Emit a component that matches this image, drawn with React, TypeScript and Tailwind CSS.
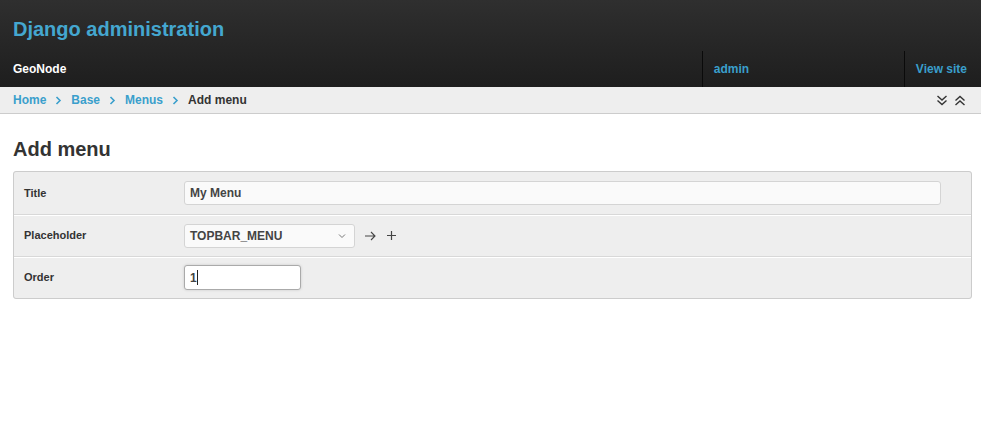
export default function App() {
  const font = { fontFamily: '"Liberation Sans", Arial, sans-serif' };
  return (
    <div className="min-h-[446px] bg-white text-[#333]" style={font}>
      <header className="bg-gradient-to-b from-[#2f2f2f] to-[#1e1e1e]">
        <div className="h-[51px] flex items-center px-[13px] pt-[6px]">
          <h1 className="text-[20px] font-bold text-[#44a7d0]">Django administration</h1>
        </div>
        <div className="flex h-[36px] items-stretch">
          <div className="flex-1 flex items-center px-[13px] text-[12px] font-bold text-white">GeoNode</div>
          <div className="w-[202px] border-l border-[#0a0a0a] flex items-center pl-[11px] text-[12px] font-bold text-[#3a9fcc]">
            admin
          </div>
          <div className="border-l border-[#0a0a0a] flex items-center pl-[11px] pr-[14px] text-[12px] font-bold text-[#3a9fcc]">
            View site
          </div>
        </div>
      </header>

      <nav className="h-[27px] bg-[#eee] border-b border-[#ccc] flex items-center px-[13px] text-[12px] font-bold">
        <a className="text-[#3a9fcc]">Home</a>
        <Chevron />
        <a className="text-[#3a9fcc]">Base</a>
        <Chevron />
        <a className="text-[#3a9fcc]">Menus</a>
        <Chevron />
        <span className="text-[#333]">Add menu</span>
        <div className="ml-auto flex items-center gap-[6px] pr-[2px] text-[#333]">
          <svg width="12" height="11" viewBox="0 0 12 11" fill="none" stroke="currentColor" strokeWidth="1.4">
            <path d="M1.5 1l4.5 4 4.5-4M1.5 5.5l4.5 4 4.5-4" />
          </svg>
          <svg width="12" height="11" viewBox="0 0 12 11" fill="none" stroke="currentColor" strokeWidth="1.4">
            <path d="M1.5 5.5l4.5-4 4.5 4M1.5 10l4.5-4 4.5 4" />
          </svg>
        </div>
      </nav>

      <main className="pl-[13px] pr-[9px] pt-[20px]">
        <h2 className="text-[20px] font-bold text-[#333] mb-[7px]">Add menu</h2>
        <fieldset className="border border-[#ccc] rounded-[3px] bg-[#eee]">
          <Row label="Title">
            <div className="w-[757px] h-[24px] border border-[#d4d4d4] rounded-[3px] bg-[#fafafa] flex items-center px-[5px] text-[12px] font-bold text-[#444]">
              My Menu
            </div>
          </Row>
          <Row label="Placeholder" divider>
            <div className="flex items-center">
              <div className="w-[171px] h-[24px] border border-[#d4d4d4] rounded-[3px] bg-[#fafafa] flex items-center justify-between pl-[5px] pr-[8px] text-[12px] font-bold text-[#444]">
                <span>TOPBAR_MENU</span>
                <svg width="8" height="6" viewBox="0 0 8 6" fill="none" stroke="#777" strokeWidth="1">
                  <path d="M1 1.5l3 3 3-3" />
                </svg>
              </div>
              <svg className="ml-[9px]" width="13" height="12" viewBox="0 0 13 12" fill="none" stroke="#444" strokeWidth="1.1">
                <path d="M1 6h10M7 2l4 4-4 4" />
              </svg>
              <svg className="ml-[9px]" width="11" height="11" viewBox="0 0 11 11" fill="none" stroke="#444" strokeWidth="1.2">
                <path d="M5.5 1v9M1 5.5h9" />
              </svg>
            </div>
          </Row>
          <Row label="Order" divider>
            <div className="w-[117px] h-[25px] border border-[#aaa] rounded-[3px] bg-white shadow-[0_0_3px_rgba(0,0,0,0.15)] flex items-center px-[5px] text-[12px] font-bold text-[#444]">
              1<span className="inline-block w-[1px] h-[15px] bg-[#222] ml-[0.5px]" />
            </div>
          </Row>
        </fieldset>
      </main>
    </div>
  );
}

function Chevron() {
  return (
    <svg className="mx-[9px]" width="7" height="9" viewBox="0 0 7 9" fill="none" stroke="#3a9fcc" strokeWidth="1.6">
      <path d="M1.5 1l3.5 3.5-3.5 3.5" />
    </svg>
  );
}

function Row({ label, divider, children }: { label: string; divider?: boolean; children: React.ReactNode }) {
  return (
    <div className={`flex items-center h-[42px] px-[10px] ${divider ? "border-t border-[#d8d8d8] shadow-[inset_0_1px_0_#fff]" : ""}`}>
      <label className="w-[160px] text-[11px] font-bold text-[#333]">{label}</label>
      {children}
    </div>
  );
}
